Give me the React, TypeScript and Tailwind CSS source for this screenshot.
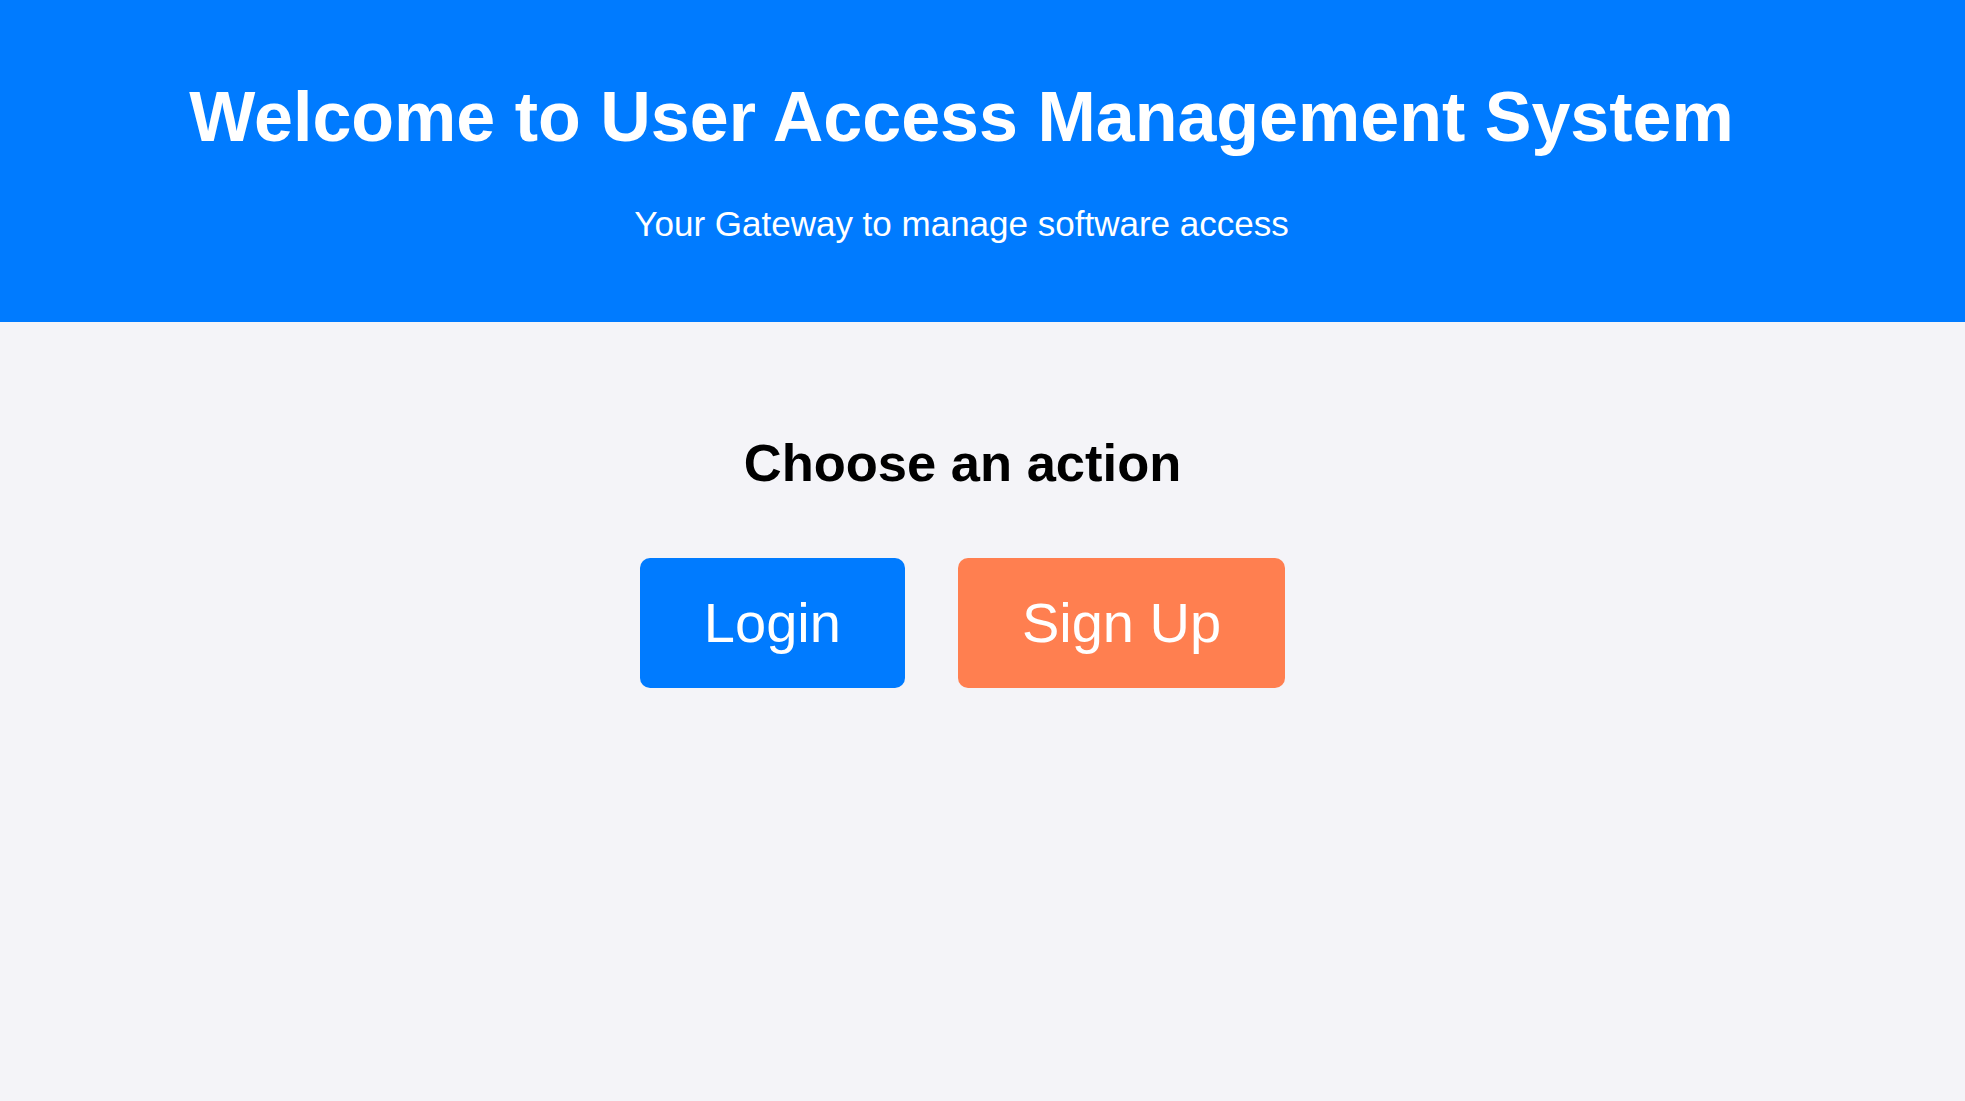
export default function App() {
  return (
    <div className="min-h-screen bg-[#f4f4f8] font-['Liberation_Sans',Arial,sans-serif]">
      <header className="bg-[#007bff] text-white text-center pt-[77px] pb-[78px] pr-[42px]">
        <h1 className="text-[70px] leading-[80px] font-bold">
          Welcome to User Access Management System
        </h1>
        <p className="mt-[47px] text-[35px] leading-[40px]">
          Your Gateway to manage software access
        </p>
      </header>

      <main className="flex flex-col items-center pt-[110px] pr-[40px]">
        <h2 className="text-[52.5px] leading-[61px] font-bold text-black">Choose an action</h2>
        <div className="mt-[65px] flex gap-[53px]">
          <button className="bg-[#007bff] text-white text-[56px] leading-[64px] py-[33px] px-[64px] rounded-[10px]">
            Login
          </button>
          <button className="bg-[#ff7f50] text-white text-[56px] leading-[64px] py-[33px] px-[64px] rounded-[10px]">
            Sign Up
          </button>
        </div>
      </main>
    </div>
  );
}
